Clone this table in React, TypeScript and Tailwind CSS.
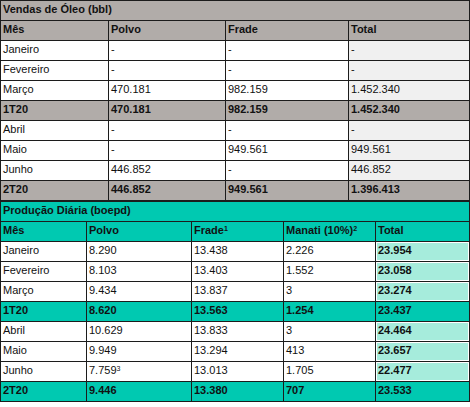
const oleo = [
  { m: 'Janeiro', p: '-', f: '-', t: '-' },
  { m: 'Fevereiro', p: '-', f: '-', t: '-' },
  { m: 'Março', p: '470.181', f: '982.159', t: '1.452.340' },
  { m: '1T20', p: '470.181', f: '982.159', t: '1.452.340', sum: true },
  { m: 'Abril', p: '-', f: '-', t: '-' },
  { m: 'Maio', p: '-', f: '949.561', t: '949.561' },
  { m: 'Junho', p: '446.852', f: '-', t: '446.852' },
  { m: '2T20', p: '446.852', f: '949.561', t: '1.396.413', sum: true },
];

const producao = [
  { m: 'Janeiro', p: '8.290', f: '13.438', n: '2.226', t: '23.954' },
  { m: 'Fevereiro', p: '8.103', f: '13.403', n: '1.552', t: '23.058' },
  { m: 'Março', p: '9.434', f: '13.837', n: '3', t: '23.274' },
  { m: '1T20', p: '8.620', f: '13.563', n: '1.254', t: '23.437', sum: true },
  { m: 'Abril', p: '10.629', f: '13.833', n: '3', t: '24.464' },
  { m: 'Maio', p: '9.949', f: '13.294', n: '413', t: '23.657' },
  { m: 'Junho', p: '7.759', sup: '3', f: '13.013', n: '1.705', t: '22.477' },
  { m: '2T20', p: '9.446', f: '13.380', n: '707', t: '23.533', sum: true },
];

const cell = 'border border-[#1c1c1c] h-5 px-[2px] pt-0 pb-[2px] align-middle text-left';

export default function App() {
  return (
    <div className="w-[470px] h-[407px] bg-white text-[#111] text-[11px] leading-none" style={{ fontFamily: '"Liberation Sans", Arial, sans-serif' }}>
      {/* Vendas de Óleo */}
      <table className="w-[469px] border-collapse table-fixed">
        <colgroup>
          <col className="w-[108px]" />
          <col className="w-[117px]" />
          <col className="w-[123px]" />
          <col className="w-[121px]" />
        </colgroup>
        <tbody>
          <tr className="bg-[#b1aca9]">
            <td colSpan={4} className={`${cell} font-bold`}>Vendas de Óleo (bbl)</td>
          </tr>
          <tr className="bg-[#b1aca9] font-bold">
            <td className={cell}>Mês</td>
            <td className={cell}>Polvo</td>
            <td className={cell}>Frade</td>
            <td className={cell}>Total</td>
          </tr>
          {oleo.map((r) => (
            <tr key={r.m} className={r.sum ? 'bg-[#b1aca9] font-bold' : 'bg-white'}>
              <td className={cell}>{r.m}</td>
              <td className={cell}>{r.p}</td>
              <td className={cell}>{r.f}</td>
              <td className={`${cell} ${r.sum ? '' : 'bg-[#f0f0f0]'}`}>{r.t}</td>
            </tr>
          ))}
        </tbody>
      </table>

      {/* Produção Diária */}
      <table className="w-[469px] border-collapse table-fixed">
        <colgroup>
          <col className="w-[86px]" />
          <col className="w-[105px]" />
          <col className="w-[92px]" />
          <col className="w-[92px]" />
          <col className="w-[94px]" />
        </colgroup>
        <tbody>
          <tr className="bg-[#00c9b1]">
            <td colSpan={5} className={`${cell} font-bold`}>Produção Diária (boepd)</td>
          </tr>
          <tr className="bg-[#00c9b1] font-bold">
            <td className={cell}>Mês</td>
            <td className={cell}>Polvo</td>
            <td className={cell}>Frade<sup className="text-[7px]">1</sup></td>
            <td className={cell}>Manati (10%)<sup className="text-[7px]">2</sup></td>
            <td className={cell}>Total</td>
          </tr>
          {producao.map((r) => (
            <tr key={r.m} className={r.sum ? 'bg-[#00c9b1] font-bold' : 'bg-white'}>
              <td className={cell}>{r.m}</td>
              <td className={cell}>
                {r.p}
                {r.sup && <sup className="text-[7px]">{r.sup}</sup>}
              </td>
              <td className={cell}>{r.f}</td>
              <td className={cell}>{r.n}</td>
              <td className={`${cell} font-bold ${r.sum ? '' : 'bg-[#a6ecdc] shadow-[inset_0_0_0_1px_white]'}`}>{r.t}</td>
            </tr>
          ))}
        </tbody>
      </table>
    </div>
  );
}
